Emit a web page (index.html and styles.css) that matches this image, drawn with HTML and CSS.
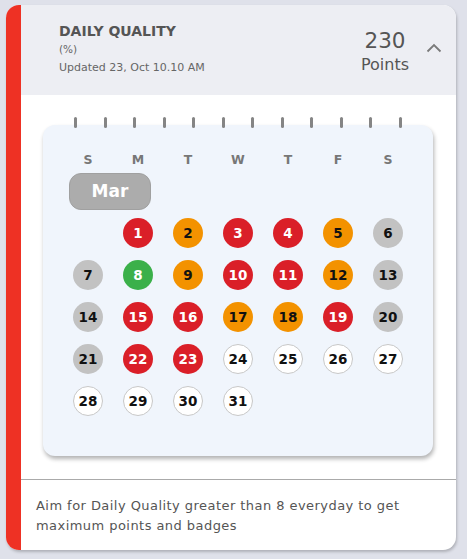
FILE: index.html
```html
<!DOCTYPE html>
<html>
<head>
<meta charset="utf-8">
<link rel="stylesheet" href="styles.css">
</head>
<body>
<div class="card">
  <div class="accent"></div>
  <div class="main">
    <header class="head">
      <div class="titles">
        <div class="title">DAILY QUALITY</div>
        <div class="unit">(%)</div>
        <div class="updated">Updated 23, Oct 10.10 AM</div>
      </div>
      <div class="points">
        <div class="num">230</div>
        <div class="lbl">Points</div>
      </div>
      <svg class="chev" width="16" height="10" viewBox="0 0 16 10"><path d="M1.5 8.5 L8 2 L14.5 8.5" fill="none" stroke="#7a7a7a" stroke-width="1.8"/></svg>
    </header>
    <section class="body">
      <div class="rings">
        <i></i><i></i><i></i><i></i><i></i><i></i><i></i><i></i><i></i><i></i><i></i><i></i>
      </div>
      <div class="cal">
        <div class="grid">
          <span class="dow">S</span><span class="dow">M</span><span class="dow">T</span><span class="dow">W</span><span class="dow">T</span><span class="dow">F</span><span class="dow">S</span>
          <div class="month"><span>Mar</span></div>
          <span></span>
          <span class="d r">1</span><span class="d o">2</span><span class="d r">3</span><span class="d r">4</span><span class="d o">5</span><span class="d g">6</span>
          <span class="d g">7</span><span class="d gr">8</span><span class="d o">9</span><span class="d r">10</span><span class="d r">11</span><span class="d o">12</span><span class="d g">13</span>
          <span class="d g">14</span><span class="d r">15</span><span class="d r">16</span><span class="d o">17</span><span class="d o">18</span><span class="d r">19</span><span class="d g">20</span>
          <span class="d g">21</span><span class="d r">22</span><span class="d r">23</span><span class="d w">24</span><span class="d w">25</span><span class="d w">26</span><span class="d w">27</span>
          <span class="d w">28</span><span class="d w">29</span><span class="d w">30</span><span class="d w">31</span>
        </div>
      </div>
    </section>
    <footer class="foot">Aim for Daily Quality greater than 8 everyday to get maximum points and badges</footer>
  </div>
</div>
</body>
</html>
```
FILE: styles.css
```css
html, body { margin: 0; padding: 0; }
body {
  background: #dfe1ea;
  font-family: "DejaVu Sans", "Open Sans", sans-serif;
  width: 467px;
  height: 559px;
}
.card {
  margin: 5px 0 0 6px;
  width: 450px;
  height: 545px;
  border-radius: 13px;
  overflow: hidden;
  display: flex;
  background: #fff;
  box-shadow: 1px 2px 3px rgba(0,0,0,0.22);
}
.accent { width: 15px; background: #ee3124; flex: none; }
.main { flex: 1; display: flex; flex-direction: column; }
.head {
  height: 90px;
  background: #edeef3;
  display: flex;
  align-items: flex-start;
  padding-left: 38px;
  box-sizing: border-box;
}
.titles { padding-top: 18px; flex: 1; }
.title { font-size: 14px; font-weight: 600; color: #555; line-height: 17px; }
.unit { font-size: 10.5px; color: #666; line-height: 13px; margin-top: 3px; }
.updated { font-size: 11px; color: #666; line-height: 14px; margin-top: 5px; }
.points { text-align: center; padding-top: 27px; color: #555; width: 70px; }
.num { font-size: 21.5px; line-height: 18px; }
.lbl { font-size: 16px; line-height: 18px; margin-top: 6px; }
.chev { margin: 38px 14px 0 6px; }
.body { flex: 1; padding: 22px 0 0 22px; border-bottom: 1px solid #aaa; }
.rings { display: flex; gap: 26.5px; padding-left: 31px; height: 11px; position: relative; z-index: 1; margin-bottom: -3px; }
.rings i { width: 3px; height: 11px; background: #858585; border-radius: 2px; display: block; }
.cal {
  width: 390px;
  height: 331px;
  background: #f0f5fc;
  border-radius: 12px;
  box-shadow: 1px 3px 4px rgba(0,0,0,0.3);
  box-sizing: border-box;
  padding: 25px 22px 0 20px;
}
.grid {
  display: grid;
  grid-template-columns: repeat(7, 50px);
  grid-template-rows: 20px 42px;
  grid-auto-rows: 42px;
  justify-items: center;
  align-items: center;
}
.dow { font-size: 12.5px; font-weight: 600; color: #777; line-height: 16px; }
.month { grid-column: 1 / -1; justify-self: start; padding-left: 6px; }
.month span {
  display: flex; align-items: center; justify-content: center;
  width: 82px; height: 37px; background: #acacac; border-radius: 12px;
  border: 1px solid #a0a0a0; box-sizing: border-box;
  color: #fff; font-weight: 700; font-size: 17px;
}
.d {
  width: 30px; height: 30px; border-radius: 50%;
  display: flex; align-items: center; justify-content: center;
  font-size: 13.5px; font-weight: 700; box-sizing: border-box;
}
.r { background: #da1f28; color: #fff; }
.o { background: #f39200; color: #111; }
.g { background: #c2c2c2; color: #111; }
.gr { background: #3bb04a; color: #fff; }
.w { background: #fff; border: 1px solid #c8c8c8; color: #111; }
.foot {
  height: 70px; box-sizing: border-box;
  padding: 16px 40px 0 15px;
  font-size: 13px; line-height: 20px; color: #555;
  letter-spacing: 0.45px;
}
```
